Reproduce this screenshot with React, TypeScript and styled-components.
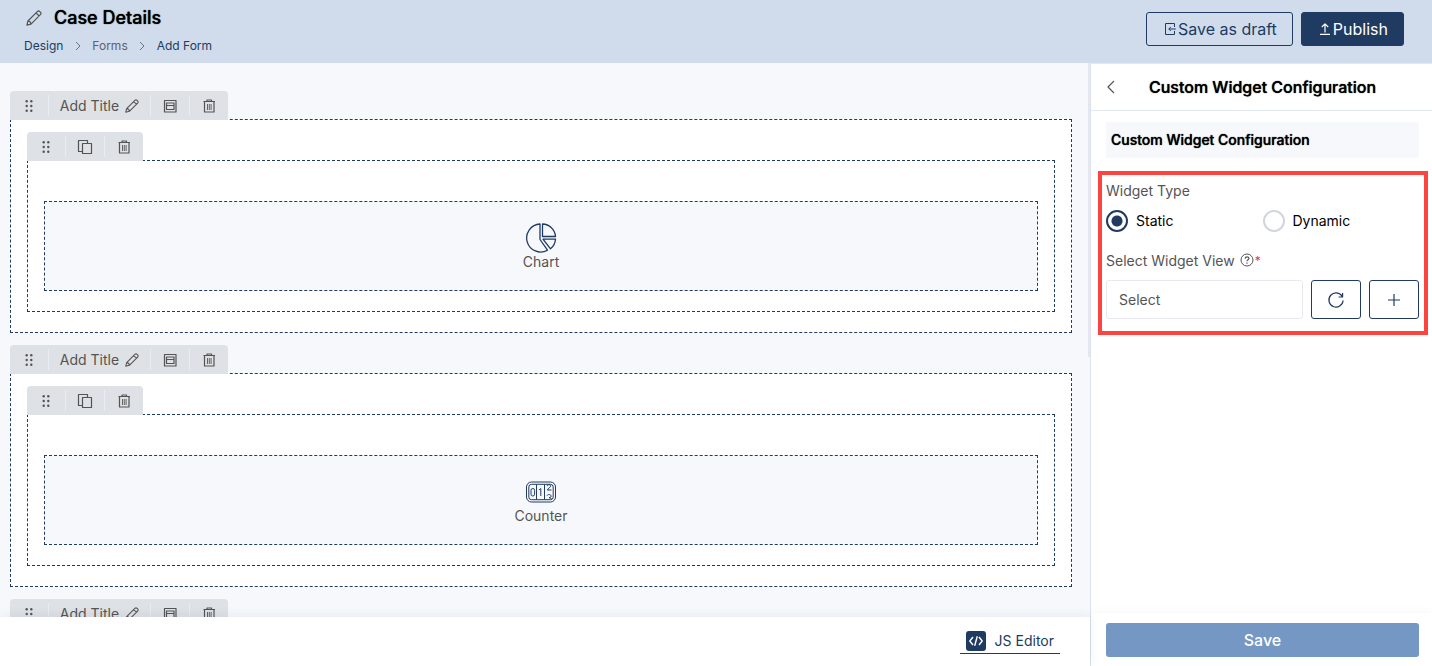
import React, { useState } from "react";
import styled, { createGlobalStyle, css } from "styled-components";

const navy = "#203b61";
const grey = "#545454";

const GlobalStyle = createGlobalStyle`
  *, *::before, *::after { box-sizing: border-box; }
  body { margin: 0; font-family: Inter, "Liberation Sans", sans-serif; font-size: 14px; color: ${grey}; }
  button, select, input { font-family: inherit; margin: 0; }
  svg { display: block; flex: none; }
`;

const Page = styled.div`
  height: 100vh;
  display: flex;
  flex-direction: column;
  background: #fff;
`;

const Header = styled.header`
  flex: none;
  display: flex;
  justify-content: space-between;
  align-items: flex-start;
  padding: 7px 28px 7px 24px;
  background: #d0dceb;
`;

const TitleRow = styled.div`
  display: flex;
  align-items: center;
  gap: 10px;
`;

const IconButton = styled.button`
  display: flex;
  align-items: center;
  justify-content: center;
  padding: 0;
  border: 0;
  background: none;
  color: ${grey};
  cursor: pointer;
`;

const heading = css`
  font-weight: 500;
  text-shadow: 0 0 1px #000;
  color: #000;
`;

const PageTitle = styled.h1`
  ${heading}
  margin: 0;
  font-size: 18px;
  line-height: 22px;
`;

const RenameButton = styled(IconButton)`
  width: 20px;
`;

const Breadcrumb = styled.nav`
  display: flex;
  align-items: center;
  margin-top: 7px;
  color: #6b7280;
`;

const Crumb = styled.a<{ $muted?: boolean }>`
  font-size: 12px;
  line-height: 20px;
  color: ${(p) => (p.$muted ? "#5b6270" : navy)};
  text-decoration: none;
`;

const CrumbArrow = styled.span`
  display: flex;
  justify-content: center;
  width: 29px;
`;

const Actions = styled.div`
  display: flex;
  gap: 8px;
  padding-top: 5px;
`;

const ActionButton = styled.button<{ $primary?: boolean }>`
  display: flex;
  align-items: center;
  gap: 2px;
  height: 34px;
  padding: 0 15px 0 17px;
  border: 1px solid ${navy};
  border-radius: 3px;
  background: ${(p) => (p.$primary ? navy : "transparent")};
  color: ${(p) => (p.$primary ? "#fff" : navy)};
  font-size: 16px;
  line-height: 20px;
  cursor: pointer;
`;

const Body = styled.div`
  flex: 1;
  min-height: 0;
  display: flex;
`;

const Workspace = styled.main`
  flex: 1;
  min-width: 0;
  display: flex;
  flex-direction: column;
`;

const CanvasRow = styled.div`
  flex: 1;
  min-height: 0;
  display: flex;
  background: #f7f8fc;
`;

const Canvas = styled.div`
  flex: 1;
  min-width: 0;
  overflow: hidden;
  display: flex;
  flex-direction: column;
  gap: 12px;
  padding: 28px 16px 0 10px;
`;

const ScrollTrack = styled.div`
  flex: none;
  width: 2px;
  background: #f7f8fc;
`;

const ScrollThumb = styled.div`
  height: 53%;
  background: #e4e7ed;
`;

const Section = styled.section`
  flex: none;
`;

const Tab = styled.div`
  position: relative;
  z-index: 1;
  display: flex;
  width: max-content;
  height: 29px;
  margin-bottom: -1px;
  padding: 4px 0;
  border-radius: 4px 4px 0 0;
  background: #dee1e5;
`;

const TabCell = styled.div<{ $wide?: boolean }>`
  display: flex;
  align-items: center;
  justify-content: center;
  gap: 6px;
  width: ${(p) => (p.$wide ? 102 : 39)}px;
  font-size: 14px;
  line-height: 20px;
  color: ${grey};
  &:first-child { width: 38px; }
  & + & { border-left: 1px solid #e9ecf0; }
`;

const dashed = css`
  border: 1px dashed ${navy};
`;

const SectionBox = styled.div`
  ${dashed}
  min-height: 60px;
  padding: 12px 16px 20px;
  background: #fff;
`;

const WidgetBox = styled.div`
  ${dashed}
  padding: 40px 16px 20px;
  background: #fff;
`;

const Widget = styled.div`
  ${dashed}
  display: flex;
  flex-direction: column;
  align-items: center;
  height: 90px;
  padding-top: 20px;
  background: #f7f8fc;
  color: ${navy};
`;

const WidgetName = styled.span`
  margin-top: -2px;
  font-size: 14px;
  line-height: 20px;
  color: ${grey};
`;

const Footer = styled.footer`
  flex: none;
  position: relative;
  z-index: 2;
  display: flex;
  justify-content: flex-end;
  align-items: flex-start;
  padding: 14px 30px 12px;
  background: #fff;
  box-shadow: 0 -2px 10px rgba(32, 59, 97, 0.07);
`;

const EditorLink = styled.a`
  display: flex;
  align-items: center;
  gap: 9px;
  padding: 0 6px 2px;
  border-bottom: 1px solid ${navy};
  color: ${navy};
  font-size: 14px;
  line-height: 20px;
  text-decoration: none;
`;

const CodeBadge = styled.span`
  display: flex;
  align-items: center;
  justify-content: center;
  width: 20px;
  height: 20px;
  border-radius: 3px;
  background: ${navy};
  color: #fff;
`;

const Panel = styled.aside`
  flex: none;
  width: 342px;
  display: flex;
  flex-direction: column;
  border-left: 1px solid #dde2ec;
  border-top: 1px solid #e3e8f1;
`;

const PanelHeader = styled.div`
  display: grid;
  grid-template-columns: 40px 1fr 38px;
  align-items: center;
  height: 47px;
  border-bottom: 1px solid #e3e8f1;
`;

const PanelTitle = styled.h2`
  ${heading}
  margin: 0;
  font-size: 16px;
  line-height: 20px;
  text-align: center;
`;

const PanelBody = styled.div`
  flex: 1;
  min-height: 0;
  padding: 11px 4px 0 7px;
`;

const GroupTitle = styled.h3`
  ${heading}
  margin: 0 9px 13px 8px;
  padding: 0 5px;
  font-size: 14px;
  line-height: 36px;
  background: #f7f8fc;
`;

const Highlight = styled.div`
  padding: 6px 5px 12px 4px;
  border: 4px solid #fc4443;
`;

const Choices = styled.fieldset`
  margin: 0;
  padding: 0;
  border: 0;
`;

const Legend = styled.legend`
  padding: 0;
  font-size: 14px;
  line-height: 20px;
`;

const ChoiceRow = styled.div`
  display: grid;
  grid-template-columns: 1fr 1fr;
  margin-top: 9px;
`;

const Choice = styled.label`
  display: flex;
  align-items: center;
  gap: 8px;
  line-height: 22px;
  color: #000;
`;

const Radio = styled.input`
  appearance: none;
  width: 22px;
  height: 22px;
  border: 2px solid #d1d5dc;
  border-radius: 50%;
  background: #fff;
  &:checked {
    border-color: ${navy};
    background: radial-gradient(circle, ${navy} 5px, #fff 6px);
  }
`;

const FieldLabel = styled.div`
  display: flex;
  align-items: center;
  margin: 19px 0 9px;
  line-height: 20px;
`;

const Help = styled.span`
  margin: -2px 1px 0 5px;
`;

const Required = styled.span`
  font-size: 12px;
  color: #e5343d;
`;

const FieldRow = styled.div`
  display: flex;
  gap: 8px;
  height: 39px;
`;

const SelectBox = styled.select`
  appearance: none;
  flex: 1;
  min-width: 0;
  padding: 0 12px;
  border: 1px solid #e6e9ef;
  border-radius: 3px;
  background: #fff;
  color: ${grey};
  font-size: 14px;
`;

const SquareButton = styled.button`
  display: flex;
  align-items: center;
  justify-content: center;
  width: 50px;
  padding: 0;
  border: 1px solid ${navy};
  border-radius: 3px;
  background: #fff;
  color: ${navy};
  cursor: pointer;
`;

const PanelFooter = styled.div`
  padding: 10px 13px 9px 15px;
  box-shadow: 0 -2px 8px rgba(0, 0, 0, 0.03);
`;

const SaveButton = styled.button`
  width: 100%;
  height: 34px;
  border: 0;
  border-radius: 3px;
  background: #7597c4;
  color: #fff;
  font-size: 16px;
  font-weight: 500;
`;

type SvgProps = { size?: number; box?: number; width?: number; children: React.ReactNode };

const Svg = ({ size = 16, box = 16, width = 1, children }: SvgProps) => (
  <svg width={size} height={size} viewBox={`0 0 ${box} ${box}`} fill="none" stroke="currentColor" strokeWidth={width} strokeLinejoin="round" aria-hidden="true">
    {children}
  </svg>
);

const Pencil = ({ size = 14 }: { size?: number }) => (
  <Svg size={size} width={1.2}>
    <path d="M.9 15.1l1-4.100L11.300 1.600a1.800 1.800 0 0 1 2.500 0l.6.600a1.800 1.800 0 0 1 0 2.500L5 14.100zM10 2.900l3.100 3.100M1.900 11c1.800.1 3 1.300 3.100 3.100" />
  </Svg>
);

const Drag = () => (
  <svg width="16" height="16" viewBox="0 0 16 16" fill={grey} aria-hidden="true">
    {[3.3, 8, 12.7].map((y) => (
      <React.Fragment key={y}>
        <circle cx="5.700" cy={y} r="1.200" />
        <circle cx="10.300" cy={y} r="1.200" />
      </React.Fragment>
    ))}
  </svg>
);

const FormIcon = () => (
  <Svg width={1.2}>
    <path d="M2.500 2.500h11.500v11.500h-11.500zM4.500 5h7.500v6.500h-7.500zM4.500 7.500h7.500" />
  </Svg>
);

const Trash = () => (
  <Svg width={1.2}>
    <path d="M2.500 3.500h11.500M6 3.500v-1.500h4.500v1.500M3.500 3.500v10.500h9.500v-10.500" />
    <path d="M6.500 6v6M8.300 6v6M10.100 6v6" strokeWidth=".9" />
  </Svg>
);

const Copy = () => (
  <Svg width={1.2}>
    <path d="M5.500 4.500h9v10h-9zM5.500 12.500h-4v-11h9v3" />
  </Svg>
);

const ChartIcon = () => (
  <Svg size={32} box={32} width={1.3}>
    <path d="M15 2A14 14 0 1 0 22.500 28.200L15 17.500zM17.500 2v12.500h13A13.500 13.500 0 0 0 17.500 2zM18 17.200h12.500a13.500 13.500 0 0 1-5 9.600z" />
  </Svg>
);

const CounterIcon = () => (
  <Svg size={32} box={32} width={1}>
    <rect x="1.500" y="6" width="29" height="20" rx="5" />
    <rect x="3.800" y="8.300" width="24.400" height="15.400" rx="2.700" />
    <path d="M11.500 8.500v15M19.500 8.500v15" />
    <rect x="6" y="12.500" width="3.600" height="7.500" rx="1.800" />
    <path d="M14 14l1.800-1.500V20M22 10c.5-2 4.200-1.500 3.600.3-.3 1.200-2.500 1.900-3.300 3.700h4.200M22 19.600c1-1.800 4.400-1.200 4.100.8-.2 1-1.300 1.300-2.100 1.300 1.500 0 2.400.5 2.300 2" />
  </Svg>
);

const Chevron = () => (
  <Svg size={10} box={10}>
    <path d="M3 1l4 4-4 4" />
  </Svg>
);

const sections = [
  { id: "chart", widget: { name: "Chart", icon: <ChartIcon /> } },
  { id: "counter", widget: { name: "Counter", icon: <CounterIcon /> } },
  { id: "empty", widget: null },
];

export default function App() {
  const [type, setType] = useState("static");
  return (
    <Page>
      <GlobalStyle />
      <Header>
        <div>
          <TitleRow>
            <RenameButton aria-label="Rename form"><Pencil size={16} /></RenameButton>
            <PageTitle>Case Details</PageTitle>
          </TitleRow>
          <Breadcrumb aria-label="Breadcrumb">
            <Crumb href="#design">Design</Crumb>
            <CrumbArrow><Chevron /></CrumbArrow>
            <Crumb href="#forms" $muted>Forms</Crumb>
            <CrumbArrow><Chevron /></CrumbArrow>
            <Crumb href="#add">Add Form</Crumb>
          </Breadcrumb>
        </div>
        <Actions>
          <ActionButton>
            <Svg size={12} box={12}><path d="M10.500 4V.5h-9v11h9V8M11.800 6h-7M6.800 4l-2 2 2 2" /></Svg>
            Save as draft
          </ActionButton>
          <ActionButton $primary>
            <Svg size={12} box={12} width={1.2}><path d="M1 11.400h10M6 9.500V1M2.800 4L6 .9 9.200 4" /></Svg>
            Publish
          </ActionButton>
        </Actions>
      </Header>
      <Body>
        <Workspace>
          <CanvasRow>
            <Canvas>
              {sections.map(({ id, widget }) => (
                <Section key={id}>
                  <Tab>
                    <TabCell><Drag /></TabCell>
                    <TabCell $wide>Add Title<IconButton aria-label="Edit title"><Pencil /></IconButton></TabCell>
                    <TabCell><IconButton aria-label="Section layout"><FormIcon /></IconButton></TabCell>
                    <TabCell><IconButton aria-label="Delete section"><Trash /></IconButton></TabCell>
                  </Tab>
                  <SectionBox>
                    {widget && (
                      <>
                        <Tab>
                          <TabCell><Drag /></TabCell>
                          <TabCell><IconButton aria-label="Copy widget"><Copy /></IconButton></TabCell>
                          <TabCell><IconButton aria-label="Delete widget"><Trash /></IconButton></TabCell>
                        </Tab>
                        <WidgetBox>
                          <Widget>
                            {widget.icon}
                            <WidgetName>{widget.name}</WidgetName>
                          </Widget>
                        </WidgetBox>
                      </>
                    )}
                  </SectionBox>
                </Section>
              ))}
            </Canvas>
            <ScrollTrack><ScrollThumb /></ScrollTrack>
          </CanvasRow>
          <Footer>
            <EditorLink href="#editor">
              <CodeBadge><Svg size={16} width={1.4}><path d="M5 4L1.800 8 5 12M11 4l3.200 4L11 12M9.300 3.200L6.700 12.800" /></Svg></CodeBadge>
              JS Editor
            </EditorLink>
          </Footer>
        </Workspace>
        <Panel>
          <PanelHeader>
            <IconButton aria-label="Back"><Svg size={14} box={14} width={1.2}><path d="M10 1l-6 6 6 6" /></Svg></IconButton>
            <PanelTitle>Custom Widget Configuration</PanelTitle>
          </PanelHeader>
          <PanelBody>
            <GroupTitle>Custom Widget Configuration</GroupTitle>
            <Highlight>
              <Choices>
                <Legend>Widget Type</Legend>
                <ChoiceRow>
                  <Choice><Radio type="radio" name="type" checked={type === "static"} onChange={() => setType("static")} />Static</Choice>
                  <Choice><Radio type="radio" name="type" checked={type === "dynamic"} onChange={() => setType("dynamic")} />Dynamic</Choice>
                </ChoiceRow>
              </Choices>
              <FieldLabel>
                <label htmlFor="view">Select Widget View</label>
                <Help>
                  <Svg size={14} box={14}>
                    <circle cx="7" cy="7" r="6" />
                    <path d="M5.200 5.700c0-2.400 3.700-2.300 3.700-.2C8.900 6.800 7 6.700 7 8.300M7 9.400v1.300" strokeWidth="1.200" />
                  </Svg>
                </Help>
                <Required>*</Required>
              </FieldLabel>
              <FieldRow>
                <SelectBox id="view"><option>Select</option></SelectBox>
                <SquareButton aria-label="Refresh"><Svg size={18} box={18} width={1.2}><path d="M15.200 5.500A7.100 7.100 0 1 0 16.100 9.500M15.600 2v4h-4" /></Svg></SquareButton>
                <SquareButton aria-label="Add"><Svg size={14} box={14} width={1.2}><path d="M7 1v12M1 7h12" /></Svg></SquareButton>
              </FieldRow>
            </Highlight>
          </PanelBody>
          <PanelFooter><SaveButton>Save</SaveButton></PanelFooter>
        </Panel>
      </Body>
    </Page>
  );
}
